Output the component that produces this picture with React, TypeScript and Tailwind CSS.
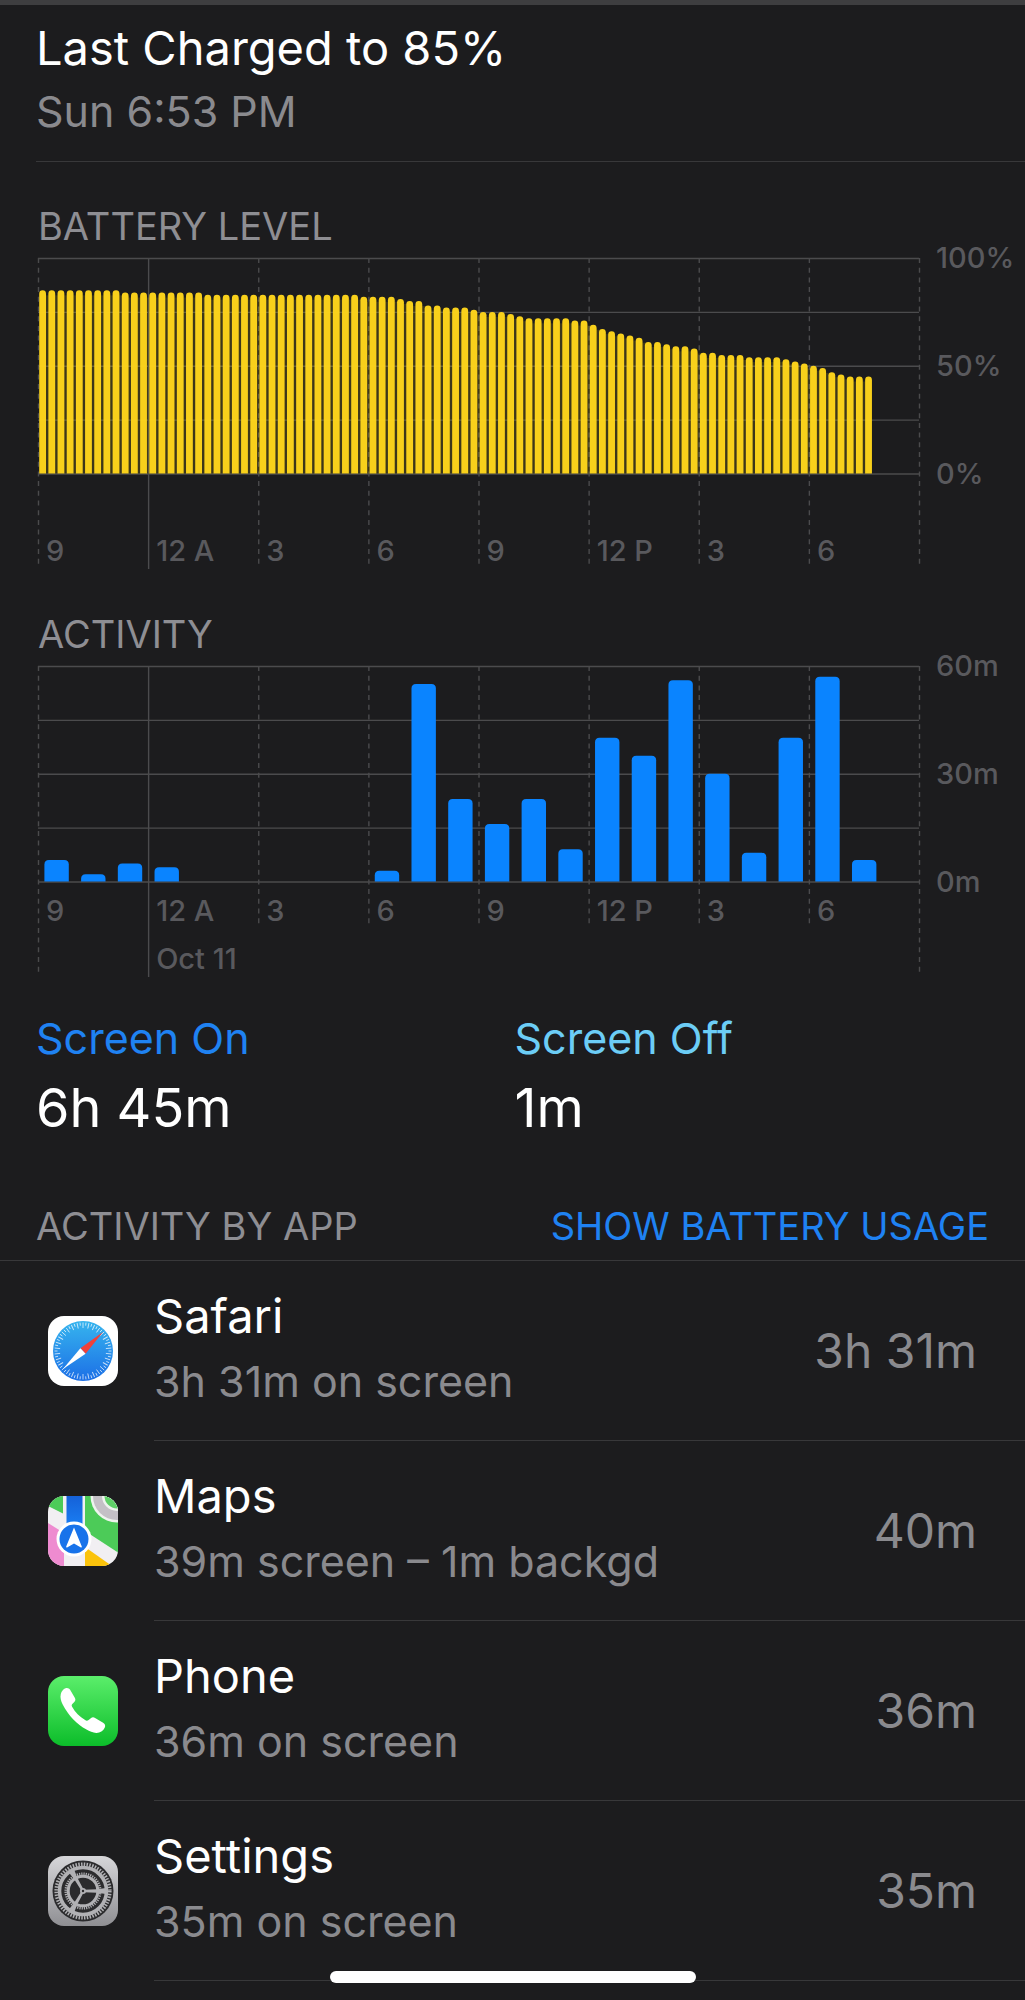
import type { ReactNode } from 'react';

interface AppUsage {
  name: string;
  detail: string;
  total: string;
  icon: ReactNode;
}

// [percent, number of consecutive 15 minute samples]
const batteryRuns: [number, number][] = [
  [85, 9], [84, 9], [83, 17], [82, 4], [81, 1], [80, 2], [78, 2], [77, 3], [76, 1], [75, 3],
  [74, 1], [73, 1], [72, 5], [71, 2], [69, 1], [67, 1], [66, 1], [65, 1], [64, 1], [63, 1],
  [61, 2], [60, 1], [59, 2], [58, 1], [56, 2], [55, 3], [54, 4], [53, 1], [52, 1], [51, 1],
  [50, 1], [49, 1], [47, 1], [46, 1], [45, 3],
];
const batteryLevels = batteryRuns.flatMap(([level, count]) => Array<number>(count).fill(level));

// minutes of activity per hour
const activity = [6, 2, 5, 4, 0, 0, 0, 0, 0, 3, 55, 23, 16, 23, 9, 40, 35, 56, 30, 8, 40, 57, 6];

const hourLabels = ['9', '12 A', '3', '6', '9', '12 P', '3', '6'];

// chart geometry, in viewBox units
const LEFT = 2;
const TOP = 18;
const PLOT_W = 881;
const PLOT_H = 215.5;
const BLOCK = PLOT_W / 8;

interface ChartProps {
  label: string;
  height: number;
  axis: string[];
  labelY: number;
  innerEnd: number;
  outerEnd: number;
  midnightEnd: number;
  date?: string;
  children: ReactNode;
}

const Chart = ({ label, height, axis, labelY, innerEnd, outerEnd, midnightEnd, date, children }: ChartProps) => (
  <svg
    viewBox={`0 0 989 ${height}`}
    className="block w-full h-auto"
    role="img"
    aria-label={label}
  >
    <g className="stroke-[#4b4b4d]">
      {[0, 1, 2, 3, 4].map((i) => {
        const y = TOP + 0.5 + (i * PLOT_H) / 4;
        return <line key={i} x1={LEFT} x2={LEFT + PLOT_W} y1={y} y2={y} strokeWidth="1.4" />;
      })}
      {Array.from({ length: 9 }, (_, i) => {
        const x = LEFT + 0.5 + i * BLOCK;
        const outer = i === 0 || i === 8;
        const end = i === 1 ? midnightEnd : outer ? outerEnd : innerEnd;
        return (
          <line
            key={i}
            x1={x}
            x2={x}
            y1={TOP}
            y2={end}
            strokeWidth="1.4"
            strokeDasharray={i === 1 ? undefined : '5 4.7'}
          />
        );
      })}
    </g>
    {children}
    <g className="fill-[#59595d] text-[29px] font-medium">
      {hourLabels.map((text, i) => (
        <text key={i} x={LEFT + 8 + i * BLOCK} y={labelY}>{text}</text>
      ))}
      {date && <text x={LEFT + 8 + BLOCK} y={labelY + 48}>{date}</text>}
      {axis.map((text, i) => (
        <text key={text} x={900} y={TOP + 10 + i * 108}>{text}</text>
      ))}
    </g>
  </svg>
);

const BatteryBars = () => {
  const pitch = BLOCK / 12;
  const base = TOP + PLOT_H;
  return (
    <g className="fill-[#ffd60a]">
      {batteryLevels.map((level, i) => {
        const h = (level / 100) * PLOT_H;
        const x = LEFT + 1.2 + i * pitch;
        const y = base - h;
        return (
          <g key={i}>
            {i < batteryLevels.length - 1 && (
              <rect x={x + 6} y={y + 5} width={4} height={h - 5} opacity="0.15" />
            )}
            <path
              d={`M${x} ${base}V${y + 3.4}a3.4 3.4 0 0 1 6.8 0V${base}z`}
              className="fill-[#fdd41c]"
              opacity="0.98"
            />
          </g>
        );
      })}
    </g>
  );
};

const ActivityBars = () => {
  const pitch = BLOCK / 3;
  const base = TOP + PLOT_H;
  return (
    <g className="fill-[#0a84ff]">
      {activity.map((minutes, i) => {
        if (!minutes) return null;
        const h = (minutes / 60) * PLOT_H;
        const x = LEFT + 6.4 + i * pitch;
        return (
          <path
            key={i}
            d={`M${x} ${base}V${base - h + 4.5}q0 -4.5 4.5 -4.5h15.4q4.5 0 4.5 4.5V${base}z`}
          />
        );
      })}
    </g>
  );
};

const SafariIcon = () => (
  <svg viewBox="0 0 70 70" className="size-[70px]" aria-hidden="true">
    <defs>
      <linearGradient id="safari" x1="0" y1="0" x2="0" y2="1">
        <stop offset="0" stopColor="#36b4ee" />
        <stop offset="1" stopColor="#1c6fe6" />
      </linearGradient>
    </defs>
    <rect width="70" height="70" rx="16" fill="#fff" />
    <circle cx="35" cy="35" r="30" fill="url(#safari)" />
    <g stroke="#fff" strokeOpacity="0.75">
      {Array.from({ length: 60 }, (_, i) => (
        <line
          key={i}
          x1="35"
          x2="35"
          y1="6.5"
          y2={i % 2 ? 9.5 : 12}
          strokeWidth="0.9"
          transform={`rotate(${i * 6} 35 35)`}
        />
      ))}
    </g>
    <path d="M55 16 32.4 32.2 37.6 37.8z" fill="#f0413a" />
    <path d="M15 53 32.4 32.2 37.6 37.8z" fill="#fff" />
  </svg>
);

const MapsIcon = () => (
  <svg viewBox="0 0 70 70" className="size-[70px]" aria-hidden="true">
    <defs>
      <clipPath id="mapsClip">
        <rect width="70" height="70" rx="16" />
      </clipPath>
      <linearGradient id="mapsBlue" x1="0" y1="0" x2="0" y2="1">
        <stop offset="0" stopColor="#1561d8" />
        <stop offset="1" stopColor="#1a80f5" />
      </linearGradient>
    </defs>
    <g clipPath="url(#mapsClip)">
      <rect width="70" height="70" fill="#f1eff2" />
      <path d="M0 0h15v17.500L0 10z" fill="#4ccb58" />
      <path d="M37 0h33v56.500L37 35z" fill="#4ccb58" />
      <path d="M0 27 16 37v33H0z" fill="#ee8bd0" />
      <path d="M37 51 64 70H37z" fill="#fbc30c" />
      <circle cx="69" cy="0" r="26.500" fill="#eef3ee" />
      <circle cx="69" cy="0" r="24" fill="#c4c0c6" />
      <circle cx="69" cy="0" r="15" fill="#eef3ee" />
      <circle cx="69" cy="0" r="12.500" fill="#5fd068" />
      <rect x="18.500" width="16" height="32" fill="url(#mapsBlue)" />
      <circle cx="26" cy="43" r="17.500" fill="#fff" />
      <circle cx="26" cy="43" r="14.500" fill="#1873ea" />
      <path d="M26 31.500 33.800 50.500q.2 1.200-.9.900L26 47.500 19.100 51.400q-1.100.3-.9-.9z" fill="#fff" />
    </g>
  </svg>
);

const PhoneIcon = () => (
  <svg viewBox="0 0 70 70" className="size-[70px]" aria-hidden="true">
    <defs>
      <linearGradient id="phone" x1="0" y1="0" x2="0" y2="1">
        <stop offset="0" stopColor="#5bee6b" />
        <stop offset="1" stopColor="#0cbd2a" />
      </linearGradient>
    </defs>
    <rect width="70" height="70" rx="16" fill="url(#phone)" />
    <path
      d="M17.500 12.200c2-.7 3.600 0 4.600 1.600l4.700 8c1 1.700.7 3-.5 4.300l-2 2c-.8.900-.7 1.700-.2 2.700 3 5.400 7.500 10 13 13.300 1.300.8 2.400.8 3.500-.2l2.200-1.700c1.400-1.200 2.800-1.200 4.300-.3l8 4.900c2 1.300 2.600 3 1.600 4.900-1.600 3.200-4.700 5.300-8.400 5.200-3.500-.1-6.800-1.500-9.800-3.300C29 48.300 20.300 39.500 14.700 28.500c-1.700-3.400-2.800-7-1.900-10.500.7-2.800 2.500-5 4.700-5.800z"
      fill="#fff"
    />
  </svg>
);

const SettingsIcon = () => (
  <svg viewBox="0 0 70 70" className="size-[70px]" aria-hidden="true">
    <defs>
      <linearGradient id="settings" x1="0" y1="0" x2="0" y2="1">
        <stop offset="0" stopColor="#d6d6d9" />
        <stop offset="1" stopColor="#8f8f93" />
      </linearGradient>
    </defs>
    <rect width="70" height="70" rx="16" fill="url(#settings)" />
    <circle cx="35" cy="35" r="30.500" fill="#2b2b2d" />
    <g fill="none" stroke="#b1b1b4">
      <circle cx="35" cy="35" r="26.800" strokeWidth="3.600" strokeDasharray="1.500 1.306" />
      <circle cx="35" cy="35" r="23.500" strokeWidth="3.600" />
      <circle cx="35" cy="35" r="17.300" strokeWidth="2.500" strokeDasharray="1.200 1.064" />
      <circle cx="35" cy="35" r="14.800" strokeWidth="3" />
    </g>
    <g fill="#b1b1b4">
      {[0, 120, 240].map((deg) => (
        <path key={deg} d="M36 33.800 49 33.300 58 32v6l-9-1.300-13-.5z" transform={`rotate(${deg} 35 35)`} />
      ))}
      <circle cx="35" cy="35" r="3" />
    </g>
    <circle cx="35" cy="35" r="1.200" fill="#2b2b2d" />
  </svg>
);

const apps: AppUsage[] = [
  { name: 'Safari', detail: '3h 31m on screen', total: '3h 31m', icon: <SafariIcon /> },
  { name: 'Maps', detail: '39m screen – 1m backgd', total: '40m', icon: <MapsIcon /> },
  { name: 'Phone', detail: '36m on screen', total: '36m', icon: <PhoneIcon /> },
  { name: 'Settings', detail: '35m on screen', total: '35m', icon: <SettingsIcon /> },
];

const App = () => {
  return (
    <div className="relative min-h-screen border-t-[5px] border-[#3e3e40] bg-[#1c1c1e] font-[Inter,sans-serif] text-white">
      <header className="ml-9 border-b border-[#38383a] pt-3 pb-[18px]">
        <h1 className="text-[47px] leading-[62px]">Last Charged to 85%</h1>
        <p className="text-[43px] leading-[64px] text-[#8a8a8e]">Sun 6:53 PM</p>
      </header>

      <main>
        <section className="pt-[42px] pl-9">
          <h2 className="pl-0.5 text-[38px] leading-[44px] text-[#8e8e93]">BATTERY LEVEL</h2>
          <div className="-mt-2">
            <Chart
              label="Battery level"
              height={340}
              axis={['100%', '50%', '0%']}
              labelY={321}
              innerEnd={324}
              outerEnd={324}
              midnightEnd={329}
            >
              <BatteryBars />
            </Chart>
          </div>
        </section>

        <section className="pt-8 pl-9">
          <h2 className="pl-0.5 text-[38px] leading-[44px] text-[#8e8e93]">ACTIVITY</h2>
          <div className="-mt-2">
            <Chart
              label="Activity"
              height={340}
              axis={['60m', '30m', '0m']}
              labelY={273}
              innerEnd={276}
              outerEnd={325}
              midnightEnd={329}
              date="Oct 11"
            >
              <ActivityBars />
            </Chart>
          </div>
        </section>

        <section className="grid grid-cols-2 gap-x-1 px-9 pt-[18px]">
          <div>
            <h3 className="text-[43px] leading-[64px] text-[#1f82f2]">Screen On</h3>
            <p className="text-[54px] leading-[76px]">6h 45m</p>
          </div>
          <div>
            <h3 className="text-[43px] leading-[64px] text-[#6ccdf6]">Screen Off</h3>
            <p className="text-[54px] leading-[76px]">1m</p>
          </div>
        </section>

        <section>
          <div className="flex items-center justify-between border-b border-[#38383a] px-9 pt-[58px] pb-3">
            <h2 className="text-[38px] leading-[44px] text-[#8e8e93]">ACTIVITY BY APP</h2>
            <button type="button" className="text-[38px] leading-[44px] text-[#1f82f2]">
              SHOW BATTERY USAGE
            </button>
          </div>
          <ul>
            {apps.map((app) => (
              <li key={app.name} className="flex items-center pl-12">
                {app.icon}
                <div className="ml-9 flex grow items-center justify-between border-b border-[#38383a] py-6 pr-12">
                  <div>
                    <h3 className="text-[47px] leading-[62px]">{app.name}</h3>
                    <p className="text-[43px] leading-[69px] text-[#8a8a8e]">{app.detail}</p>
                  </div>
                  <span className="text-[48px] leading-[64px] text-[#8a8a8e]">{app.total}</span>
                </div>
              </li>
            ))}
          </ul>
        </section>
      </main>

      <div className="absolute bottom-[17px] left-1/2 h-3 w-[366px] -translate-x-1/2 rounded-full bg-white" />
    </div>
  );
};

export default App;
